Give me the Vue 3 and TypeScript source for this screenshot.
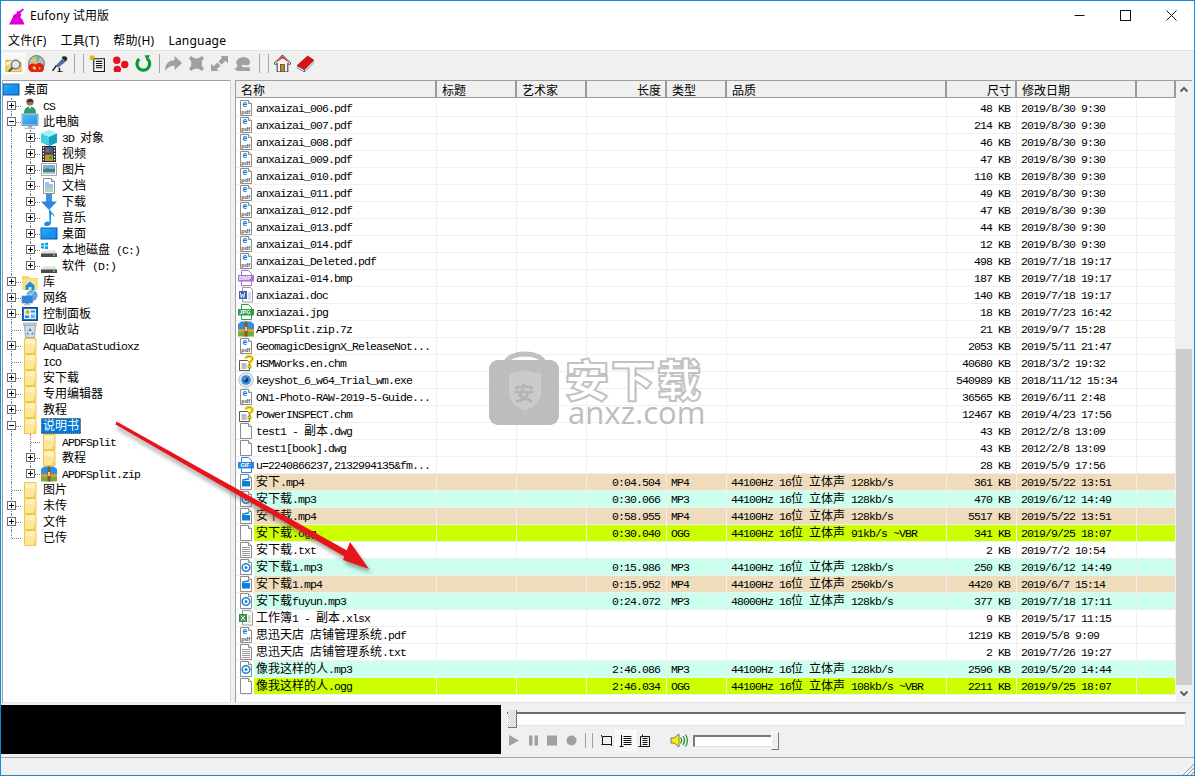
<script setup lang="ts">
interface Node { t: string; i: string; g: string[]; x?: string; sel?: boolean }
interface File { n: string; i: string; len?: string; ty?: string; q?: string; s: string; d: string; c?: string }

function runs(s: string) {
  const m = s.match(/[\u2E80-\uFFFF]+|[^\u2E80-\uFFFF]+/g) || []
  return m.map((t) => ({ t, c: /[\u2E80-\uFFFF]/.test(t) ? 'cjk' : 'lat' }))
}

const top = (t: string, i: string, x?: string, sel?: boolean): Node => ({ t, i, g: ['tee'], x, sel })
const sub = (t: string, i: string, x?: string): Node => ({ t, i, g: ['pipe', 'tee'], x })
const end = (t: string, i: string, x?: string): Node => ({ t, i, g: ['pipe', 'ell'], x })

const tree: Node[] = [
  { t: '桌面', i: 'desk', g: [] },
  top('CS', 'user', '+'),
  top('此电脑', 'monitor', '-'),
  sub('3D 对象', 'cube', '+'),
  sub('视频', 'film', '+'),
  sub('图片', 'pic', '+'),
  sub('文档', 'docs', '+'),
  sub('下载', 'dl', '+'),
  sub('音乐', 'note', '+'),
  sub('桌面', 'desk', '+'),
  sub('本地磁盘 (C:)', 'cdisk', '+'),
  end('软件 (D:)', 'disk', '+'),
  top('库', 'lib', '+'),
  top('网络', 'net', '+'),
  top('控制面板', 'panel', '+'),
  top('回收站', 'bin'),
  top('AquaDataStudioxz', 'folder', '+'),
  top('ICO', 'folder'),
  top('安下载', 'folder', '+'),
  top('专用编辑器', 'folder', '+'),
  top('教程', 'folder', '+'),
  top('说明书', 'folder', '-', true),
  sub('APDFSplit', 'folder'),
  sub('教程', 'folder', '+'),
  end('APDFSplit.zip', 'zip', '+'),
  top('图片', 'folder'),
  top('未传', 'folder', '+'),
  top('文件', 'folder', '+'),
  { t: '已传', i: 'folder', g: ['ell'] },
]

const Q = '44100Hz 16位 立体声 128kb/s'
const TAN = 'tan'
const MINT = 'mint'
const LIME = 'lime'
const pdfDate = '2019/8/30 9:30'
const files: File[] = [
  { n: 'anxaizai_006.pdf', i: 'pdf', s: '48', d: pdfDate },
  { n: 'anxaizai_007.pdf', i: 'pdf', s: '214', d: pdfDate },
  { n: 'anxaizai_008.pdf', i: 'pdf', s: '46', d: pdfDate },
  { n: 'anxaizai_009.pdf', i: 'pdf', s: '47', d: pdfDate },
  { n: 'anxaizai_010.pdf', i: 'pdf', s: '110', d: pdfDate },
  { n: 'anxaizai_011.pdf', i: 'pdf', s: '49', d: pdfDate },
  { n: 'anxaizai_012.pdf', i: 'pdf', s: '47', d: pdfDate },
  { n: 'anxaizai_013.pdf', i: 'pdf', s: '44', d: pdfDate },
  { n: 'anxaizai_014.pdf', i: 'pdf', s: '12', d: pdfDate },
  { n: 'anxaizai_Deleted.pdf', i: 'pdf', s: '498', d: '2019/7/18 19:17' },
  { n: 'anxaizai-014.bmp', i: 'bmp', s: '187', d: '2019/7/18 19:17' },
  { n: 'anxiazai.doc', i: 'word', s: '140', d: '2019/7/18 19:17' },
  { n: 'anxiazai.jpg', i: 'jpg', s: '18', d: '2019/7/23 16:42' },
  { n: 'APDFSplit.zip.7z', i: 'zip', s: '21', d: '2019/9/7 15:28' },
  { n: 'GeomagicDesignX_ReleaseNot...', i: 'pdf', s: '2053', d: '2019/5/11 21:47' },
  { n: 'HSMWorks.en.chm', i: 'help', s: '40680', d: '2018/3/2 19:32' },
  { n: 'keyshot_6_w64_Trial_wm.exe', i: 'eye', s: '540989', d: '2018/11/12 15:34' },
  { n: 'ON1-Photo-RAW-2019-5-Guide...', i: 'pdf', s: '36565', d: '2019/6/11 2:48' },
  { n: 'PowerINSPECT.chm', i: 'help', s: '12467', d: '2019/4/23 17:56' },
  { n: 'test1 - 副本.dwg', i: 'blank', s: '43', d: '2012/2/8 13:09' },
  { n: 'test1[book].dwg', i: 'blank', s: '43', d: '2012/2/8 13:09' },
  { n: 'u=2240866237,2132994135&fm...', i: 'gif', s: '28', d: '2019/5/9 17:56' },
  { n: '安下.mp4', i: 'mp4', len: '0:04.504', ty: 'MP4', q: Q, s: '361', d: '2019/5/22 13:51', c: TAN },
  { n: '安下载.mp3', i: 'mp3', len: '0:30.066', ty: 'MP3', q: Q, s: '470', d: '2019/6/12 14:49', c: MINT },
  { n: '安下载.mp4', i: 'mp4', len: '0:58.955', ty: 'MP4', q: Q, s: '5517', d: '2019/5/22 13:51', c: TAN },
  { n: '安下载.ogg', i: 'blank', len: '0:30.040', ty: 'OGG', q: '44100Hz 16位 立体声 91kb/s ~VBR', s: '341', d: '2019/9/25 18:07', c: LIME },
  { n: '安下载.txt', i: 'txt', s: '2', d: '2019/7/2 10:54' },
  { n: '安下载1.mp3', i: 'mp3', len: '0:15.986', ty: 'MP3', q: Q, s: '250', d: '2019/6/12 14:49', c: MINT },
  { n: '安下载1.mp4', i: 'mp4', len: '0:15.952', ty: 'MP4', q: '44100Hz 16位 立体声 250kb/s', s: '4420', d: '2019/6/7 15:14', c: TAN },
  { n: '安下载fuyun.mp3', i: 'mp3', len: '0:24.072', ty: 'MP3', q: '48000Hz 16位 立体声 128kb/s', s: '377', d: '2019/7/18 17:11', c: MINT },
  { n: '工作簿1 - 副本.xlsx', i: 'xls', s: '9', d: '2019/5/17 11:15' },
  { n: '思迅天店 店铺管理系统.pdf', i: 'pdf', s: '1219', d: '2019/5/8 9:09' },
  { n: '思迅天店 店铺管理系统.txt', i: 'txt', s: '2', d: '2019/7/26 19:27' },
  { n: '像我这样的人.mp3', i: 'mp3', len: '2:46.086', ty: 'MP3', q: Q, s: '2596', d: '2019/5/20 14:44', c: MINT },
  { n: '像我这样的人.ogg', i: 'blank', len: '2:46.034', ty: 'OGG', q: '44100Hz 16位 立体声 108kb/s ~VBR', s: '2211', d: '2019/9/25 18:07', c: LIME },
]

const heads = [
  { t: '名称', w: 201, cl: 'h-name' },
  { t: '标题', w: 80, cl: '' },
  { t: '艺术家', w: 70, cl: '' },
  { t: '长度', w: 80, cl: 'r' },
  { t: '类型', w: 60, cl: '' },
  { t: '品质', w: 220, cl: '' },
  { t: '尺寸', w: 70, cl: 'r' },
  { t: '修改日期', w: 120, cl: '' },
  { t: '', w: 39, cl: '' },
]
const menus = ['文件(F)', '工具(T)', '帮助(H)', 'Language']
</script>

<template>
  <div class="screen">
    <svg class="defs" aria-hidden="true">
      <defs>
        <linearGradient id="gblue" x1="0" y1="0" x2="1" y2="1"><stop offset="0" stop-color="#2bb0ff" /><stop offset="1" stop-color="#0a78dc" /></linearGradient>
        <g id="page"><path d="M2.5.5h8l3 3v12h-11z" fill="#fff" stroke="#8c8c8c" /><path d="M10.5.5v3h3" fill="#eee" stroke="#8c8c8c" /></g>
        <g id="pdf"><use href="#page" /><text x="4.4" y="7.4" font-size="8.5" font-weight="700" font-family="Liberation Sans" fill="#0b7fdc">e</text><text x="3.3" y="13.6" font-size="5.6" font-weight="700" font-family="Liberation Sans" fill="#555">pdf</text></g>
        <g id="blank"><use href="#page" /></g>
        <g id="txt"><use href="#page" /><path d="M4 5.5h8M4 7.5h8M4 9.5h8M4 11.5h8M4 13.5h8" stroke="#999" /></g>
        <g id="mp4"><use href="#page" /><path d="M4 7h8v5.500H4z" fill="#0b7fdc" /><path d="M4 5.500l7-1.500.4 1.500-7 1.500z" fill="#0b7fdc" /></g>
        <g id="mp3"><use href="#page" /><circle cx="8" cy="8.500" r="3.800" fill="none" stroke="#1a86e0" stroke-width="1.600" /><circle cx="8" cy="8.500" r="1.500" fill="#1a86e0" /></g>
        <g id="bmp"><path d="M3.500.5h7l3 3v12h-10z" fill="#fff" stroke="#a774cf" /><rect x="0" y="5" width="16" height="6.500" fill="#a774cf" /><text x="1" y="10.400" font-size="5.500" font-weight="700" font-family="Liberation Sans" fill="#fff">BMP</text></g>
        <g id="jpg"><path d="M3.500.5h7l3 3v12h-10z" fill="#fff" stroke="#2d9e4a" /><rect x="0" y="5" width="16" height="6.500" fill="#2d9e4a" /><text x="1.500" y="10.400" font-size="5.500" font-weight="700" font-family="Liberation Sans" fill="#fff">JPG</text></g>
        <g id="gif"><path d="M3.500.5h7l3 3v12h-10z" fill="#fff" stroke="#2b88dc" /><rect x="0" y="5" width="16" height="6.500" fill="#2b88dc" /><text x="2.500" y="10.400" font-size="5.500" font-weight="700" font-family="Liberation Sans" fill="#fff">GIF</text></g>
        <g id="word"><path d="M4.500.5h8l2 2.500v12h-10z" fill="#fff" stroke="#9a9a9a" /><path d="M10 6h3M10 8h3M10 10h3M10 12h3" stroke="#b0b8c8" /><rect x="1" y="4" width="8" height="8" fill="#3d63b8" /><path d="M2.300 5.500l1 5 1.200-3.500 1.200 3.500 1-5" fill="none" stroke="#fff" stroke-width=".9" /></g>
        <g id="xls"><path d="M4.500.5h8l2 2.500v12h-10z" fill="#fff" stroke="#9a9a9a" /><path d="M10 6h3M10 8h3M10 10h3M10 12h3" stroke="#9cc49c" /><rect x="1" y="4" width="8" height="8" fill="#2e8b45" /><path d="M2.800 5.500l4.400 5M7.200 5.500l-4.400 5" stroke="#fff" stroke-width="1.100" /></g>
        <g id="help"><path d="M1.500 5.500h8l2 2v8h-10z" fill="#fff" stroke="#555" /><path d="M3.500 9h5M3.500 11h5M3.500 13h5" stroke="#777" /><path d="M7.500 3.600C8 1 14.500.4 14.500 3.800c0 2.400-3 2.400-3 5" fill="none" stroke="#f4d800" stroke-width="2.800" /><path d="M7.500 3.600C8 1 14.500.4 14.500 3.800c0 2.400-3 2.400-3 5" fill="none" stroke="#7c6a00" stroke-width=".5" /><rect x="10" y="10" width="3" height="3" fill="#f4d800" stroke="#7c6a00" stroke-width=".5" /></g>
        <g id="eye"><circle cx="8" cy="8" r="7.300" fill="#e3e8ee" stroke="#b9c0c8" /><circle cx="8" cy="8" r="4.800" fill="#2d8ee8" /><circle cx="8" cy="8" r="2.300" fill="#22344a" /><circle cx="7" cy="7" r=".8" fill="#fff" /></g>
        <g id="zip"><path d="M0 3l3-2.500h10l3 2.500v5H0z" fill="#2f8fe0" /><rect x="0" y="8" width="16" height="3" fill="#e59a2a" /><rect x="0" y="11" width="16" height="4.500" fill="#6fae3c" /><rect x="6.500" y=".5" width="3" height="15" fill="#8a5a22" /><rect x="7" y="6" width="2" height="4" fill="#f0d080" /></g>
        <g id="desk"><rect x="0" y="2" width="16" height="11" fill="url(#gblue)" stroke="#0a5da8" /><path d="M1 12l13-9v9z" fill="#1890ee" /></g>
        <g id="user"><circle cx="8" cy="4" r="3.600" fill="#9a6b4c" /><path d="M8 1a3.500 3 0 0 0-3.400 3h6.800A3.500 3 0 0 0 8 1z" fill="#4a3020" /><path d="M2 15.500c0-5 2.500-7 6-7s6 2 6 7z" fill="#2f9b6d" /><path d="M6.500 8.500L8 11l1.500-2.500z" fill="#fff" /></g>
        <g id="monitor"><rect x="0" y="0" width="16" height="11.500" fill="#a7dcfb" stroke="#6b90a8" stroke-width=".8" /><rect x="1" y="1" width="14" height="9.500" fill="url(#gblue)" opacity=".75" /><rect x="6" y="11.500" width="4" height="2.200" fill="#9aa7b0" /><rect x="2.500" y="13.700" width="11" height="1.300" fill="#b5bec6" /></g>
        <g id="cube"><path d="M8 .2L16 3.600v8.800L8 16 0 12.400V3.600z" fill="#3fd0dc" /><path d="M8 .2L16 3.600 8 7 0 3.600z" fill="#a6f0f4" /><path d="M8 7l8-3.400v8.800L8 16z" fill="#1c9fc4" /></g>
        <g id="film"><rect x="1" y="0" width="14" height="16" fill="#2b2b2b" /><rect x="4" y="1" width="8" height="6.500" fill="#3a5f9e" /><rect x="4" y="8.500" width="8" height="6.500" fill="#c09a2c" /><rect x="5" y="3" width="3" height="3" fill="#d94b2c" /><rect x="8" y="10" width="3" height="3" fill="#3e9e42" /><path d="M2.500 1v14M13.500 1v14" stroke="#fff" stroke-width="1.300" stroke-dasharray="1.500 1.500" /></g>
        <g id="pic"><rect x=".5" y="1.500" width="15" height="12" fill="#fff" stroke="#a8a8a8" /><rect x="2" y="3" width="12" height="5" fill="#6fb4ee" /><path d="M2 8l4-2 4 1.500 4-1V12H2z" fill="#4a8060" /><path d="M2 10h12v2H2z" fill="#9ec5e8" /></g>
        <g id="docs"><use href="#page" /><path d="M4 5h4M4 7h8M4 9h8" stroke="#2c88dc" /><path d="M4 11h8M4 13h8" stroke="#6f9e80" /></g>
        <g id="dl"><rect x="5" y="0" width="6" height="8" fill="#3f93e4" /><path d="M0 7.500h16L8 16z" fill="#2e86dc" /></g>
        <g id="note"><path d="M8 0h1.500c.5 3 4 3.500 4 7-1-1.500-2-2.500-3.500-2.700V13c0 2-2 3-4 3s-3-1-3-2 1.500-2.500 3.500-2.500c.7 0 1.500.2 2 .5z" fill="#1a8fe8" /></g>
        <g id="disk"><path d="M2 8.500h12l2 3v3.500H0v-3.500z" fill="#e2e2e2" /><rect x="0" y="11.500" width="16" height="3.500" fill="#4a4a4a" /><rect x="12" y="12.500" width="2" height="1.500" fill="#4fdb4f" /></g>
        <g id="cdisk"><use href="#disk" /><path d="M0 1.500l3-.5v2.500H0zM3.800.9L7 .4v3.100H3.800zM0 4.200h3v2.500l-3-.4zM3.800 4.200H7v3l-3.200-.4z" fill="#1a9be8" /></g>
        <g id="lib"><path d="M0 2h6l2 2h8v12H0z" fill="#f6d365" /><path d="M0 5h16v11H0z" fill="#fbe08a" /><path d="M3.500 11.500L8 7.500l4.500 4v4.500h-3v-3h-3v3h-3z" fill="#1890e0" /></g>
        <g id="net"><circle cx="10" cy="5.500" r="5.500" fill="#5aa3e8" /><path d="M7 2c2 1 4 4 3 8M12 1c-1 3-4 4-7 4" stroke="#cfe6fa" fill="none" stroke-width=".8" /><rect x="0" y="6" width="10.500" height="7" fill="#2c88dc" stroke="#5a7f9e" stroke-width=".6" /><rect x="3.500" y="13" width="3.500" height="1.300" fill="#8aa0b0" /><rect x="2" y="14.300" width="6.500" height="1" fill="#a9b6c0" /></g>
        <g id="panel"><rect x=".5" y="1.500" width="15" height="13" fill="#1672bf" stroke="#0f4f88" /><rect x="2" y="3" width="12" height="10" fill="#dff0fb" /><circle cx="5.500" cy="6" r="2" fill="#f2a01e" /><rect x="9" y="4.500" width="4" height="2" fill="#2f8be0" /><rect x="3" y="9.500" width="4" height="2.500" fill="#2f8be0" /><rect x="9" y="8.500" width="4" height="3.500" fill="#6cb4ec" /></g>
        <g id="bin"><path d="M2.500 3h11l-1 12.500h-9z" fill="#d9dde1" stroke="#9ea3a8" /><rect x="1.500" y="1" width="13" height="2.500" fill="#c4c8cc" stroke="#a0a4a8" stroke-width=".6" /><path d="M8 6l2 3H6zM5.500 10l1.500 2.500H4.500zM10.500 10l1 2.500H9z" fill="#2497e0" /></g>
        <g id="folder"><path d="M2.500.5h11.500v15H2.500z" fill="#fde698" stroke="#eec84c" /><rect x="3.500" y="1.500" width="9.500" height="5" fill="#fff0bc" /><path d="M11.500 12.500l2.500-1v4h-2.500z" fill="#f2cf5a" /></g>

        <g id="t1"><path d="M1 5h5l1 2h8v9H1z" fill="#f6d365" stroke="#b99526" stroke-width=".7" /><path d="M1 7l14-5v3L1 10z" fill="#fff3c2" /><circle cx="10" cy="9" r="4" fill="#dbeafc" stroke="#7a7a7a" stroke-width="1.300" /><path d="M7 12l-3.500 3.500" stroke="#555" stroke-width="2" /></g>
        <g id="t2"><circle cx="8" cy="8" r="7.500" fill="#b9b9b9" stroke="#555" stroke-width=".7" /><path d="M8 1l3 1-2 5z" fill="#2dd06a" /><path d="M2 6l4-4 1 5z" fill="#f0cd20" /><path d="M0 11c2-3 5-4 7-2 2-2 5-2 7 0 2 3 1 6-1 7H3c-2-1-3-3-3-5z" fill="#e0201c" /><path d="M4 12l2-2 2 3-2 1zM10 11l2 1-1 2z" fill="#f7d21e" /></g>
        <g id="t3"><path d="M10 2.500c1-1.800 3.500-1.800 4.700-.6s.7 3.200-1.200 4.400z" fill="#2b2b2b" /><path d="M10.500 3.500l3 3-7 5.500-2-2z" fill="#4a6fa0" /><path d="M5 10l-3.500 5M8 12v4" stroke="#111" stroke-width="1.300" /><path d="M6 16h5" stroke="#111" stroke-width="1.400" /></g>
        <g id="t4"><path d="M4.500 3.500h10v12h-10z" fill="#fff" stroke="#111" /><path d="M6.500 6h6M6.500 8h6M6.500 10h6M6.500 12h6" stroke="#111" /><path d="M3 0v5M.5 2.500h5M1 .5l4 4M5 .5l-4 4" stroke="#d8b400" /></g>
        <g id="t5"><circle cx="4.500" cy="5" r="3.500" fill="#e8101a" /><circle cx="12" cy="9" r="3.500" fill="#e8101a" /><circle cx="5" cy="13.500" r="3.500" fill="#e8101a" /></g>
        <g id="t6"><path d="M12.200 4.200A6 6 0 1 1 4 3.700" fill="none" stroke="#0c9a2a" stroke-width="3" /><path d="M4 .2l5 0-2.500 6z" transform="translate(5 0)" fill="#0c9a2a" /></g>
        <g id="t7"><path d="M0 15C0 8 4 5 9 5V1l7 6.500L9 14v-4c-3 0-6 1-9 5z" fill="#a0a0a0" /></g>
        <g id="t8"><path d="M1 3l2-2 3 2h4l3-2 2 2-2 3v4l2 3-2 2-3-2H6l-3 2-2-2 2-3V6z" fill="#a0a0a0" /></g>
        <g id="t9"><path d="M9 1h7v7l-2.500-2.500L10 9l-3-3 3.500-3.500zM7 15H0V8l2.500 2.500L6 7l3 3-3.500 3.500z" fill="#a0a0a0" /></g>
        <g id="t10"><path d="M2 8c0-4 3-6 7-6s6 2 6 5-3 3-5 2.500H7l1.500 2H15V15H4c-2 0-3-1-3-3h2V9z" fill="#a0a0a0" /></g>
        <g id="t11"><path d="M8 0L0 8l1.500 1L3 7.800V16h10V7.800L14.500 9 16 8z" fill="#f6f6f6" stroke="#111" stroke-width=".8" /><path d="M8 1L1.500 7.500 8 3l6.500 4.500z" fill="#d02818" /><rect x="6" y="9" width="4" height="7" fill="#b98a1e" stroke="#333" stroke-width=".6" /></g>
        <g id="t12"><path d="M0 10L10 1l6 4-9 9z" fill="#e01016" stroke="#700" stroke-width=".6" /><path d="M0 10l7 4v2l-7-4z" fill="#eee" stroke="#444" stroke-width=".6" /><path d="M7 14l9-9v2l-9 9z" fill="#fff" stroke="#444" stroke-width=".6" /></g>
      </defs>
    </svg>

    <div class="app">
      <header class="title">
        <svg class="logo" viewBox="0 0 17 17"><path d="M0 16.500L3 11l1.500-4L8 5 7.500 3l2 .5L14 .5l1 1.200-3.500 3 .8 2.300-1 2.500 2.200 2L15.500 16.500z" fill="#e100d8" /></svg>
        <span class="title-text">Eufony 试用版</span>
        <div class="win">
          <svg class="wb" viewBox="0 0 46 30"><path d="M18.500 14.500h10" stroke="#111" /></svg>
          <svg class="wb" viewBox="0 0 46 30"><rect x="18.500" y="9.500" width="10" height="10" fill="none" stroke="#111" /></svg>
          <svg class="wb" viewBox="0 0 46 30"><path d="M18.500 9.500l10 10M28.500 9.500l-10 10" stroke="#111" /></svg>
        </div>
      </header>

      <nav class="menu">
        <span v-for="m in menus" :key="m" class="mi">{{ m }}</span>
      </nav>

      <div class="toolbar">
        <span class="tb pressed"><svg class="ti" viewBox="0 0 16 16"><use href="#t1" /></svg></span>
        <span class="tb"><svg class="ti" viewBox="0 0 16 16"><use href="#t2" /></svg></span>
        <span class="tb"><svg class="ti" viewBox="0 0 16 16"><use href="#t3" /></svg></span>
        <i class="sep s1"></i><i class="sep s2"></i>
        <span class="tb"><svg class="ti" viewBox="0 0 16 16"><use href="#t4" /></svg></span>
        <span class="tb"><svg class="ti" viewBox="0 0 16 16"><use href="#t5" /></svg></span>
        <span class="tb"><svg class="ti" viewBox="0 0 16 16"><use href="#t6" /></svg></span>
        <i class="sep s3"></i>
        <span class="tb"><svg class="ti" viewBox="0 0 16 16"><use href="#t7" /></svg></span>
        <span class="tb"><svg class="ti" viewBox="0 0 16 16"><use href="#t8" /></svg></span>
        <span class="tb"><svg class="ti" viewBox="0 0 16 16"><use href="#t9" /></svg></span>
        <span class="tb"><svg class="ti" viewBox="0 0 16 16"><use href="#t10" /></svg></span>
        <i class="sep s4"></i><i class="sep s2"></i>
        <span class="tb"><svg class="ti" viewBox="0 0 16 16"><use href="#t11" /></svg></span>
        <span class="tb"><svg class="ti" viewBox="0 0 16 16"><use href="#t12" /></svg></span>
      </div>

      <main class="panes">
        <section class="tree">
          <div v-for="(n, idx) in tree" :key="idx" class="node">
            <span v-for="(g, k) in n.g" :key="k" class="cell" :class="g">
              <b v-if="k === n.g.length - 1 && n.x" class="exp">
                <i class="h"></i><i v-if="n.x === '+'" class="v"></i>
              </b>
            </span>
            <svg class="nico" viewBox="0 0 16 16"><use :href="'#' + n.i" /></svg>
            <span class="lbl" :class="{ sel: n.sel }"><span v-for="(r, k) in runs(n.t)" :key="k" :class="r.c">{{ r.t }}</span></span>
          </div>
        </section>

        <section class="list">
          <div class="grid">
            <div class="hdr">
              <span v-for="h in heads" :key="h.t" class="hc" :class="h.cl" :style="{ width: h.w + 'px' }">{{ h.t }}</span>
            </div>
            <div class="rows">
              <div v-for="f in files" :key="f.n" class="rw" :class="f.c">
                <div class="c c-name">
                  <span class="slot"><svg class="fico" viewBox="0 0 16 16"><use :href="'#' + f.i" /></svg></span>
                  <span class="nm"><span v-for="(r, k) in runs(f.n)" :key="k" :class="r.c">{{ r.t }}</span></span>
                </div>
                <div class="c w80"></div>
                <div class="c w70"></div>
                <div class="c w80 ra lat-c">{{ f.len }}</div>
                <div class="c w60 lat-c">{{ f.ty }}</div>
                <div class="c w220"><span v-if="f.q"><span v-for="(r, k) in runs(f.q)" :key="k" :class="r.c">{{ r.t }}</span></span></div>
                <div class="c w70 ra lat-c">{{ f.s }} KB</div>
                <div class="c w120 lat-c">{{ f.d }}</div>
                <div class="c w39"></div>
              </div>
            </div>
          </div>
          <div class="sb">
            <svg class="arw" viewBox="0 0 16 17"><path d="M4.500 10.500L8 7l3.500 3.500" fill="none" stroke="#606060" stroke-width="2" /></svg>
            <div class="track"></div>
            <div class="thumb"></div>
            <svg class="arw" viewBox="0 0 16 17"><path d="M4.500 6.500L8 10l3.500-3.500" fill="none" stroke="#606060" stroke-width="2" /></svg>
          </div>
        </section>
      </main>

      <div class="player">
        <div class="video"></div>
        <div class="ctrl">
          <div class="seek"><div class="seek-track"></div><div class="seek-thumb"></div></div>
          <div class="btns">
            <svg class="pb" viewBox="0 0 19 19"><path d="M4 4l10 5.500L4 15z" fill="#a0a0a0" /></svg>
            <svg class="pb" viewBox="0 0 19 19"><path d="M5 4.500h3.500v10H5zM10.500 4.500H14v10h-3.500z" fill="#a0a0a0" /></svg>
            <svg class="pb" viewBox="0 0 19 19"><rect x="4" y="4.500" width="10" height="10" fill="#a0a0a0" /></svg>
            <svg class="pb" viewBox="0 0 19 19"><circle cx="9.500" cy="9.500" r="5" fill="#a0a0a0" /></svg>
            <i class="psep a"></i><i class="psep b"></i>
            <svg class="pb" viewBox="0 0 19 19"><path d="M5.500 5.500h9v8h-10M4.500 4v1.500M14.500 13.500V15M5.500 5.500v8" fill="none" stroke="#111" /></svg>
            <svg class="pb on" viewBox="0 0 19 19"><path d="M5.500 4v12M3.500 15.500h4M7.500 5.500h8M7.500 7.500h8M7.500 9.500h8M7.500 11.500h8M7.500 13.500h8" fill="none" stroke="#111" /></svg>
            <svg class="pb" viewBox="0 0 19 19"><path d="M5.500 5.500h9v10h-9zM7.500 3.500v2M7.500 7.500h5M7.500 9.500h5M7.500 11.500h5M7.500 13.500h5M3.500 15.500h3" fill="none" stroke="#111" /></svg>
            <svg class="pb spk" viewBox="0 0 19 19"><path d="M2 7h3l5-4v13l-5-4H2z" fill="#f7f000" stroke="#777" /><path d="M11.500 6.500c1.500 2 1.500 4 0 6M14 5c2 3 2 6 0 9M16.500 3.500c2.500 3.500 2.500 8.500 0 12" fill="none" stroke="#1d8a1d" stroke-width="1.200" /></svg>
            <div class="vol"></div>
            <div class="vol-thumb"></div>
          </div>
        </div>
      </div>

      <footer class="status">
        <svg class="grip" viewBox="0 0 11 11"><path d="M11 0L0 11M11 4l-7 7M11 8l-3 3" stroke="#9a9a9a" /></svg>
      </footer>
    </div>

    <div class="wm">
      <svg class="wm-bag" viewBox="0 0 72 78"><path d="M17 16C20 4 52 4 55 16" fill="none" stroke="#c0c0c0" stroke-width="5" /><rect x="0" y="13" width="70" height="65" rx="9" fill="#bdbdbd" /><path d="M20 26c8 0 12-2 16-3 4 1 8 3 16 3v20c0 9-9 15-16 18-7-3-16-9-16-18z" fill="#cbcbcb" /></svg>
      <span class="wm-mark">安</span>
      <div class="wm-text">
        <span class="wm-cn">安下载</span>
        <span class="wm-en">anxz.com</span>
      </div>
    </div>

    <svg class="arrow" viewBox="0 0 1195 776">
      <defs><filter id="blur" x="-10%" y="-10%" width="120%" height="120%"><feGaussianBlur stdDeviation="2" /></filter></defs>
      <g filter="url(#blur)" opacity=".55" transform="translate(2 4)" fill="#555">
        <path d="M116 422l234 131-1 6L115 425z" /><path d="M369 569l-26-9 7-18z" />
      </g>
      <g fill="#e8141c">
        <path d="M116.500 421.500l234 131-2.500 6-232.500-134z" /><path d="M369 569l-26-9 7-18z" />
      </g>
    </svg>
  </div>
</template>

<style scoped>
.screen { position: relative; width: 1195px; height: 776px; overflow: hidden; }
.defs { display: block; width: 0; height: 0; }
.app {
  box-sizing: border-box; width: 1195px; height: 776px; display: flex; flex-direction: column;
  border: 1px solid #1a86d8; background: #f0f0f0; color: #000;
  font: 12px "Noto Sans CJK SC", sans-serif;
}
.title { height: 30px; flex: none; background: #fff; display: flex; align-items: center; }
.logo { width: 17px; height: 17px; margin: 0 4px 0 8px; }
.title-text { font: 12px "Noto Sans", "Noto Sans CJK SC", sans-serif; line-height: 30px; letter-spacing: .1px; }
.win { margin-left: auto; display: flex; height: 30px; }
.wb { width: 46px; height: 30px; display: block; }
.menu { height: 19px; flex: none; background: #fff; display: flex; gap: 14px; padding-left: 7px; align-items: center; font: 12px "Noto Sans", "Noto Sans CJK SC", sans-serif; line-height: 19px; }
.mi { white-space: pre; letter-spacing: .2px; }
.toolbar { height: 30px; flex: none; display: flex; align-items: flex-start; padding: 2px 0 0 1px; box-sizing: border-box; border-top: 1px solid #e3e3e3; }
.tb { width: 23px; height: 21px; display: flex; align-items: center; justify-content: center; box-sizing: border-box; }
.tb.pressed { background: #f8f8f8; border: 1px solid #fff; }
.ti { width: 17px; height: 17px; display: block; }
.sep { width: 1px; height: 19px; background: #a6a6a6; display: block; }
.s1 { margin: 1px 8px 0 3px; }
.s2 { margin: 1px 2px 0 0; }
.s3 { margin: 1px 2px 0 4px; }
.s4 { margin: 1px 8px 0 5px; }
.panes { flex: 1; min-height: 0; display: flex; padding: 0 1px 0 1px; }
.tree { box-sizing: border-box; width: 229px; margin-right: 4px; background: #fff; border: 1px solid #a0a0a0; border-right-color: #d8d8d8; border-bottom-color: #e8e8e8; padding-top: 1px; overflow: hidden; }
.node { display: flex; height: 16px; line-height: 16px; align-items: center; white-space: pre; }
.cell { width: 19px; height: 16px; position: relative; flex: none; display: block; }
.pipe::before, .tee::before, .ell::before { content: ""; position: absolute; left: 8px; top: 0; bottom: 0; border-left: 1px dotted #808080; }
.ell::before { bottom: 8px; }
.tee::after, .ell::after { content: ""; position: absolute; left: 9px; right: 1px; top: 8px; border-top: 1px dotted #808080; }
.exp { position: absolute; left: 4px; top: 3px; width: 9px; height: 9px; box-sizing: border-box; background: #fff; border: 1px solid #6a6a6a; z-index: 1; }
.exp .h { position: absolute; left: 1px; right: 1px; top: 3px; height: 1px; background: #000; }
.exp .v { position: absolute; top: 1px; bottom: 1px; left: 3px; width: 1px; background: #000; }
.nico { width: 16px; height: 16px; flex: none; display: block; overflow: visible; }
.lbl { margin-left: 3px; padding: 0 2px; height: 16px; line-height: 14px; display: block; }
.lbl.sel { background: #0078d7; color: #fff; outline: 1px dotted #d08a30; outline-offset: -1px; }
.cjk { font: 12px/14px "Noto Sans CJK SC", sans-serif; }
.lat { font: 11.5px/14px "Liberation Mono", monospace; letter-spacing: -.9px; }
.lat-c { font: 11.5px/17px "Liberation Mono", monospace; letter-spacing: -.9px; }
.rw .cjk, .rw .lat { line-height: 13px; }
.list { flex: 1; min-width: 0; display: flex; background: #fff; border: 1px solid #a0a0a0; border-right: 0; border-bottom-color: #e6e6e6; box-sizing: border-box; margin-right: 1px; }
.grid { width: 940px; flex: none; display: flex; flex-direction: column; overflow: hidden; }
.hdr { display: flex; height: 16px; flex: none; margin-bottom: 2px; background: #f0f0f0; border-bottom: 1px solid #9a9a9a; box-sizing: content-box; }
.hc { box-sizing: border-box; height: 16px; line-height: 17px; padding: 0 5px 0 5px; border-right: 2px solid #9a9a9a; white-space: pre; flex: none; }
.h-name { padding-left: 5px; }
.hc.r { text-align: right; padding-right: 4px; }
.rows { flex: 1; min-height: 0; }
.rw { display: flex; height: 17px; box-sizing: border-box; border-bottom: 1px solid #f0f0f0; }
.c { box-sizing: border-box; height: 16px; line-height: 13px; border-right: 1px solid #f0f0f0; padding: 0 5px 0 4px; white-space: pre; flex: none; }
.c.lat-c { line-height: 17px; }
.w80 { width: 80px; } .w70 { width: 70px; } .w60 { width: 60px; } .w220 { width: 220px; } .w120 { width: 120px; } .w39 { width: 39px; }
.ra { text-align: right; padding-right: 6px; }
.c-name { width: 201px; display: flex; padding: 0; }
.slot { width: 18px; height: 16px; flex: none; background: #fff; padding-left: 2px; box-sizing: border-box; }
.fico { width: 16px; height: 16px; display: block; overflow: visible; }
.nm { flex: 1; padding-left: 2px; }
.tan .c:not(.c-name), .tan .nm { background: #eedcbc; }
.mint .c:not(.c-name), .mint .nm { background: #ccffee; }
.lime .c:not(.c-name), .lime .nm { background: #ccff00; }
.sb { width: 16px; flex: none; display: flex; flex-direction: column; background: #f0f0f0; }
.arw { width: 16px; height: 17px; display: block; flex: none; }
.track { flex: 1; }
.thumb { height: 336px; flex: none; background: #cdcdcd; }
.player { height: 54px; flex: none; display: flex; padding-top: 2px; box-sizing: border-box; }
.video { width: 500px; height: 49px; background: #000; flex: none; }
.ctrl { flex: 1; min-width: 0; padding: 5px 0 0 4px; }
.seek { position: relative; height: 18px; display: flex; align-items: center; margin-left: 2px; width: 679px; }
.seek-track { flex: 1; height: 14px; box-sizing: border-box; background: #fff; border-top: 2px solid #6e6e6e; border-bottom: 1px solid #e2e2e2; border-right: 1px solid #e2e2e2; }
.seek-thumb { position: absolute; left: 1px; top: 0; width: 9px; height: 18px; box-sizing: border-box; background: repeating-conic-gradient(#f4f4f4 0 25%, #cfcfcf 0 50%) 0 0/2px 2px; border-right: 1px solid #777; border-bottom: 1px solid #777; }
.btns { display: flex; align-items: center; height: 19px; margin-top: 3px; }
.pb { width: 19px; height: 19px; flex: none; display: block; }
.pb.on { background: #f8f8f8; outline: 1px solid #fff; }
.psep { width: 1px; height: 15px; background: #a0a0a0; display: block; flex: none; }
.psep.a { margin: 0 6px 0 4px; }
.psep.b { margin: 0 4px 0 0; }
.spk { margin-left: 15px; }
.vol { width: 78px; height: 12px; margin-left: 5px; box-sizing: border-box; background: #fff; border-top: 2px solid #7a7a7a; border-left: 2px solid #7a7a7a; border-bottom: 1px solid #dedede; }
.vol-thumb { width: 8px; height: 18px; background: #f0f0f0; box-sizing: border-box; border: 1px solid #fff; border-right-color: #777; border-bottom-color: #777; }
.status { height: 18px; flex: none; box-sizing: border-box; border-top: 1px solid #a6a6a6; display: flex; justify-content: flex-end; align-items: flex-end; }
.grip { width: 11px; height: 11px; display: block; }
.wm { position: absolute; left: 489px; top: 347px; width: 216px; height: 80px; display: flex; pointer-events: none; }
.wm-bag { width: 72px; height: 78px; flex: none; display: block; }
.wm-mark { position: absolute; left: 23px; top: 34px; width: 24px; text-align: center; font: 700 20px/24px "Noto Sans CJK SC", sans-serif; color: #b4b4b4; }
.wm-text { display: flex; flex-direction: column; margin-left: 4px; }
.wm-cn { font: 900 44px/44px "Noto Sans CJK SC", sans-serif; letter-spacing: 2px; color: #fff; -webkit-text-stroke: 2px #c2c2c2; margin-top: 9px; white-space: pre; }
.wm-en { font: 31px/24px "Open Sans", sans-serif; color: #bdbdbd; padding-left: 3px; }
.arrow { position: absolute; left: 0; top: 0; width: 1195px; height: 776px; pointer-events: none; }
</style>
